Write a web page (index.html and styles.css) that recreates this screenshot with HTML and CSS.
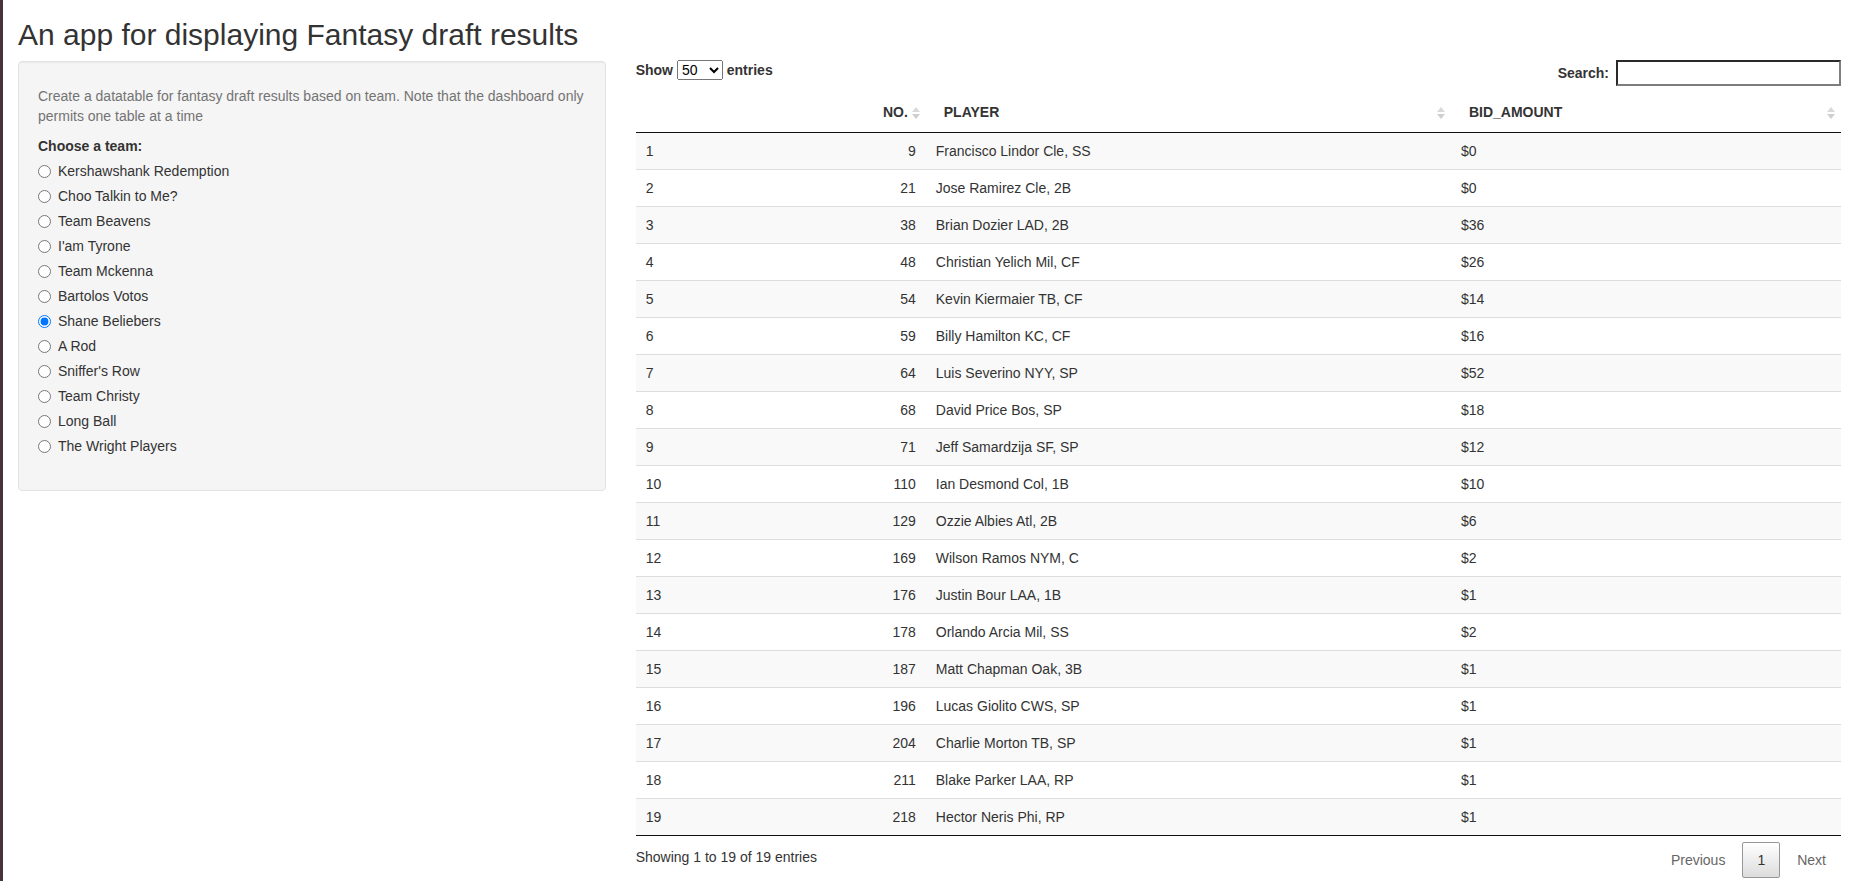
FILE: index.html
```html
<!DOCTYPE html>
<html lang="en">
<head>
<meta charset="utf-8">
<title>An app for displaying Fantasy draft results</title>
<link rel="stylesheet" href="styles.css">
</head>
<body>
<div class="page">
  <h2 class="title">An app for displaying Fantasy draft results</h2>
  <div class="row">
    <div class="sidebar">
      <form class="well">
        <span class="help-block">Create a datatable for fantasy draft results based on team. Note that the dashboard only permits one table at a time</span>
        <div class="form-group">
          <label class="control-label">Choose a team:</label>
          <div class="options">
            <div class="radio"><label><input type="radio" name="team"><span>Kershawshank Redemption</span></label></div>
            <div class="radio"><label><input type="radio" name="team"><span>Choo Talkin to Me?</span></label></div>
            <div class="radio"><label><input type="radio" name="team"><span>Team Beavens</span></label></div>
            <div class="radio"><label><input type="radio" name="team"><span>I'am Tyrone</span></label></div>
            <div class="radio"><label><input type="radio" name="team"><span>Team Mckenna</span></label></div>
            <div class="radio"><label><input type="radio" name="team"><span>Bartolos Votos</span></label></div>
            <div class="radio"><label><input type="radio" name="team" checked><span>Shane Beliebers</span></label></div>
            <div class="radio"><label><input type="radio" name="team"><span>A Rod</span></label></div>
            <div class="radio"><label><input type="radio" name="team"><span>Sniffer's Row</span></label></div>
            <div class="radio"><label><input type="radio" name="team"><span>Team Christy</span></label></div>
            <div class="radio"><label><input type="radio" name="team"><span>Long Ball</span></label></div>
            <div class="radio"><label><input type="radio" name="team"><span>The Wright Players</span></label></div>
          </div>
        </div>
      </form>
    </div>
    <div class="main">
      <div class="dt-top">
        <label class="dt-length">Show <select class="dt-select"><option>10</option><option>25</option><option selected>50</option><option>100</option></select> entries</label>
        <label class="dt-filter">Search:<input type="search" class="dt-search"></label>
      </div>
      <table class="dt">
        <colgroup>
          <col class="c-idx"><col class="c-no"><col class="c-player"><col class="c-bid">
        </colgroup>
        <thead>
          <tr>
            <th></th>
            <th class="num sortable">NO.<svg class="sort" width="8" height="14" viewBox="0 0 8 14"><polygon points="0,6 4,1 8,6" fill="#d9d9d9"/><polygon points="0,8 4,13 8,8" fill="#cfcfcf"/></svg></th>
            <th class="sortable">PLAYER<svg class="sort" width="8" height="14" viewBox="0 0 8 14"><polygon points="0,6 4,1 8,6" fill="#d9d9d9"/><polygon points="0,8 4,13 8,8" fill="#cfcfcf"/></svg></th>
            <th class="sortable">BID_AMOUNT<svg class="sort" width="8" height="14" viewBox="0 0 8 14"><polygon points="0,6 4,1 8,6" fill="#d9d9d9"/><polygon points="0,8 4,13 8,8" fill="#cfcfcf"/></svg></th>
          </tr>
        </thead>
        <tbody>
          <tr class="odd"><td>1</td><td class="num">9</td><td>Francisco Lindor Cle, SS</td><td>$0</td></tr>
          <tr><td>2</td><td class="num">21</td><td>Jose Ramirez Cle, 2B</td><td>$0</td></tr>
          <tr class="odd"><td>3</td><td class="num">38</td><td>Brian Dozier LAD, 2B</td><td>$36</td></tr>
          <tr><td>4</td><td class="num">48</td><td>Christian Yelich Mil, CF</td><td>$26</td></tr>
          <tr class="odd"><td>5</td><td class="num">54</td><td>Kevin Kiermaier TB, CF</td><td>$14</td></tr>
          <tr><td>6</td><td class="num">59</td><td>Billy Hamilton KC, CF</td><td>$16</td></tr>
          <tr class="odd"><td>7</td><td class="num">64</td><td>Luis Severino NYY, SP</td><td>$52</td></tr>
          <tr><td>8</td><td class="num">68</td><td>David Price Bos, SP</td><td>$18</td></tr>
          <tr class="odd"><td>9</td><td class="num">71</td><td>Jeff Samardzija SF, SP</td><td>$12</td></tr>
          <tr><td>10</td><td class="num">110</td><td>Ian Desmond Col, 1B</td><td>$10</td></tr>
          <tr class="odd"><td>11</td><td class="num">129</td><td>Ozzie Albies Atl, 2B</td><td>$6</td></tr>
          <tr><td>12</td><td class="num">169</td><td>Wilson Ramos NYM, C</td><td>$2</td></tr>
          <tr class="odd"><td>13</td><td class="num">176</td><td>Justin Bour LAA, 1B</td><td>$1</td></tr>
          <tr><td>14</td><td class="num">178</td><td>Orlando Arcia Mil, SS</td><td>$2</td></tr>
          <tr class="odd"><td>15</td><td class="num">187</td><td>Matt Chapman Oak, 3B</td><td>$1</td></tr>
          <tr><td>16</td><td class="num">196</td><td>Lucas Giolito CWS, SP</td><td>$1</td></tr>
          <tr class="odd"><td>17</td><td class="num">204</td><td>Charlie Morton TB, SP</td><td>$1</td></tr>
          <tr><td>18</td><td class="num">211</td><td>Blake Parker LAA, RP</td><td>$1</td></tr>
          <tr class="odd"><td>19</td><td class="num">218</td><td>Hector Neris Phi, RP</td><td>$1</td></tr>
        </tbody>
      </table>
      <div class="dt-bottom">
        <div class="dt-info">Showing 1 to 19 of 19 entries</div>
        <div class="dt-paginate">
          <a class="pg-btn disabled">Previous</a><a class="pg-btn current">1</a><a class="pg-btn disabled">Next</a>
        </div>
      </div>
    </div>
  </div>
</div>
</body>
</html>
```

FILE: styles.css
```css
* { box-sizing: border-box; }

html, body {
  margin: 0;
  padding: 0;
}

body {
  min-height: 100vh;
  border-left: 3px solid #47343a;
  background: #fff;
  color: #333;
  font-family: "Liberation Sans", Arial, Helvetica, sans-serif;
  font-size: 14px;
  line-height: 1.42857143;
}

.page {
  padding: 0 15px;
}

.title {
  margin: 18px 0 10px;
  font-size: 30px;
  font-weight: 500;
  line-height: 1.1;
  color: #333;
}

.row {
  display: flex;
  margin: 0 -15px;
}

.sidebar {
  flex: 0 0 33.33333%;
  padding: 0 15px;
}

.main {
  flex: 0 0 66.66667%;
  padding: 0 15px;
}

/* Well */
.well {
  display: block;
  min-height: 20px;
  padding: 19px;
  margin: 0 0 20px;
  background: #f5f5f5;
  border: 1px solid #e3e3e3;
  border-radius: 4px;
  box-shadow: inset 0 1px 1px rgba(0, 0, 0, 0.05);
}

.help-block {
  display: block;
  margin-top: 5px;
  margin-bottom: 10px;
  color: #737373;
}

.form-group {
  margin-bottom: 15px;
}

.control-label {
  display: inline-block;
  margin-bottom: 5px;
  font-weight: 700;
}

.radio {
  position: relative;
  display: block;
  margin: 10px 0;
}

.radio:first-child {
  margin-top: 0;
}

.radio + .radio {
  margin-top: -5px;
}

.radio label {
  display: block;
  min-height: 20px;
  padding-left: 20px;
  font-weight: 400;
  cursor: pointer;
}

.radio input {
  position: absolute;
  width: 13px;
  height: 13px;
  margin: 4px 0 0 -20px;
}

/* DataTables controls */
.dt-top {
  display: flex;
  justify-content: space-between;
  align-items: flex-start;
  height: 30.5px;
}

.dt-length,
.dt-filter {
  font-weight: 700;
  display: inline-block;
}

.dt-length {
  margin-top: -1px;
}

.dt-select {
  font: inherit;
  font-weight: 400;
  font-size: 14px;
  color: #000;
  margin: 0;
}

.dt-filter {
  display: flex;
  align-items: center;
  margin-top: -1px;
}

.dt-search {
  width: 225px;
  height: 26px;
  margin: 0 0 0 7px;
  padding: 1px 2px;
  font: inherit;
  font-weight: 400;
  border-style: solid;
  border-width: 2px;
  border-color: #2a2a2a #7d7d7d #7d7d7d #2a2a2a;
  background: #fff;
  outline: none;
}

/* Table */
.dt {
  width: 100%;
  table-layout: fixed;
  border-collapse: separate;
  border-spacing: 0;
  border-bottom: 1px solid #111;
}

.c-idx { width: 12.04%; }
.c-no { width: 12.03%; }
.c-player { width: 43.57%; }
.c-bid { width: 32.36%; }

.dt th {
  position: relative;
  padding: 10px 18px;
  text-align: left;
  font-weight: 700;
  border-bottom: 1px solid #111;
}

.dt th.num,
.dt td.num {
  text-align: right;
}

.sort {
  position: absolute;
  right: 6px;
  top: 14px;
}

.dt td {
  padding: 8px 10px;
  border-top: 1px solid #ddd;
}

.dt tbody tr:first-child td {
  border-top: none;
}

.dt tr.odd {
  background: #f9f9f9;
}

/* Bottom */
.dt-bottom {
  display: flex;
  justify-content: space-between;
  align-items: flex-start;
}

.dt-info {
  padding-top: 11.5px;
}

.dt-paginate {
  display: flex;
  padding-top: 6px;
}

.pg-btn {
  display: inline-block;
  min-width: 1.5em;
  padding: 7px 14px;
  margin-left: 2px;
  text-align: center;
  border: 1px solid transparent;
  border-radius: 2px;
  color: #666;
  line-height: 20px;
  cursor: default;
}

.pg-btn.current {
  color: #333;
  border-color: #979797;
  background: linear-gradient(to bottom, #fff 0%, #dcdcdc 100%);
}
```
